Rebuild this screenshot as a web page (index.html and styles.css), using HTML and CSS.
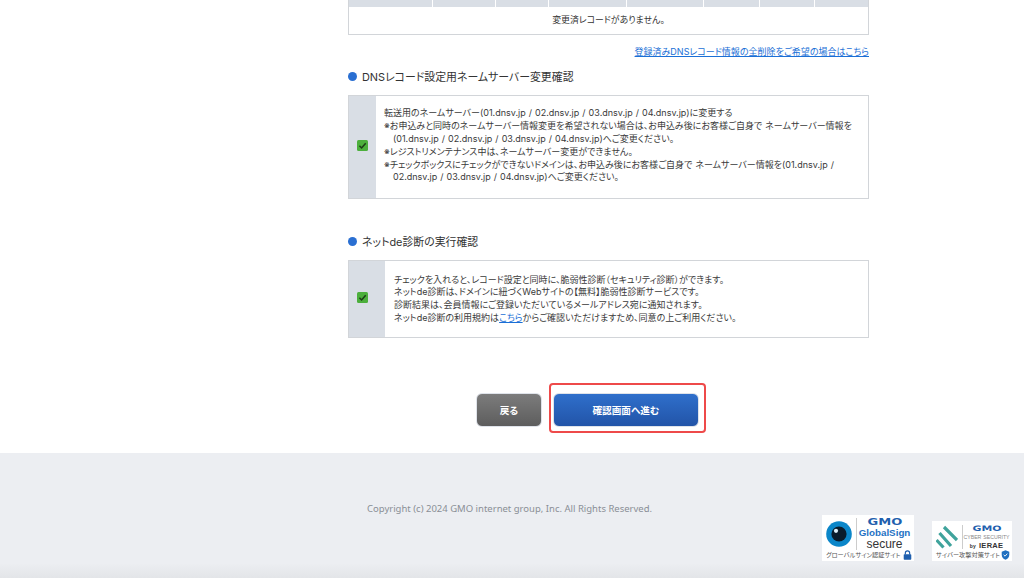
FILE: index.html
```html
<!DOCTYPE html>
<html lang="ja">
<head>
    <meta charset="UTF-8">
    <title>DNSレコード設定</title>
    <link rel="stylesheet" href="styles.css">
</head>
<body>
    <div class="page">
        <main class="content">
            <table class="record-table">
                <tr class="record-head">
                    <th></th><th></th><th></th><th></th><th></th><th></th><th></th><th></th>
                </tr>
                <tr>
                    <td colspan="8">変更済レコードがありません。</td>
                </tr>
            </table>
            <p class="delete-link"><a href="#">登録済みDNSレコード情報の全削除をご希望の場合はこちら</a></p>

            <h2 class="section-title first">DNSレコード設定用ネームサーバー変更確認</h2>
            <div class="check-box ns-box">
                <div class="check-cell narrow"><span class="checkmark"><svg viewBox="0 0 10 10"><path d="M2.2 5.2 4.2 7.2 7.9 2.9" /></svg></span></div>
                <div class="check-text ns-text">
                    <p class="lead">転送用のネームサーバー(01.dnsv.jp / 02.dnsv.jp / 03.dnsv.jp / 04.dnsv.jp)に変更する</p>
                    <p class="note">※お申込みと同時のネームサーバー情報変更を希望されない場合は、お申込み後にお客様ご自身で ネームサーバー情報を<br>(01.dnsv.jp / 02.dnsv.jp / 03.dnsv.jp / 04.dnsv.jp)へご変更ください。</p>
                    <p class="note">※レジストリメンテナンス中は、ネームサーバー変更ができません。</p>
                    <p class="note">※チェックボックスにチェックができないドメインは、お申込み後にお客様ご自身で ネームサーバー情報を(01.dnsv.jp /<br>02.dnsv.jp / 03.dnsv.jp / 04.dnsv.jp)へご変更ください。</p>
                </div>
            </div>

            <h2 class="section-title second">ネットde診断の実行確認</h2>
            <div class="check-box diag-box">
                <div class="check-cell wide"><span class="checkmark"><svg viewBox="0 0 10 10"><path d="M2.2 5.2 4.2 7.2 7.9 2.9" /></svg></span></div>
                <div class="check-text diag-text">
                    <p>チェックを入れると、レコード設定と同時に、脆弱性診断（セキュリティ診断）ができます。</p>
                    <p>ネットde診断は、ドメインに紐づくWebサイトの【無料】脆弱性診断サービスです。</p>
                    <p>診断結果は、会員情報にご登録いただいているメールアドレス宛に通知されます。</p>
                    <p>ネットde診断の利用規約は<a href="#">こちら</a>からご確認いただけますため、同意の上ご利用ください。</p>
                </div>
            </div>

            <div class="button-row">
                <button class="btn btn-back">戻る</button>
                <div class="highlight">
                    <button class="btn btn-next">確認画面へ進む</button>
                </div>
            </div>
        </main>
    </div>

    <footer class="footer">
        <p class="copyright">Copyright (c) 2024 GMO internet group, Inc. All Rights Reserved.</p>
        <div class="badges">
            <div class="badge badge-gs">
                <div class="badge-main">
                    <svg class="eye" viewBox="0 0 26 26">
                        <circle cx="13" cy="13" r="12.8" fill="#0b86c9" />
                        <circle cx="13" cy="13" r="7.6" fill="#0a1c2c" />
                        <circle cx="10" cy="9.8" r="2.1" fill="#dff1fa" />
                    </svg>
                    <div class="gs-words">
                        <span class="gmo">GMO</span>
                        <span class="gs-name">GlobalSign</span>
                        <span class="gs-secure">secure</span>
                    </div>
                </div>
                <div class="badge-foot">
                    <span>グローバルサイン認証サイト</span>
                    <svg class="lock" viewBox="0 0 10 11">
                        <path d="M2.6 5V3.3a2.4 2.4 0 0 1 4.8 0V5" fill="none" stroke="#1f5fae" stroke-width="1.3" />
                        <rect x="0.8" y="4.8" width="8.4" height="6" rx="0.8" fill="#1f5fae" />
                    </svg>
                </div>
            </div>
            <div class="badge badge-cs">
                <div class="badge-main">
                    <svg class="stripes" viewBox="0 0 22 24">
                        <path d="M8 2 21 15M3.500 8 15 21M.5 15 7.500 22.500" fill="none" stroke="#3fa39c" stroke-width="3.2" />
                    </svg>
                    <div class="cs-words">
                        <span class="gmo">GMO</span>
                        <span class="cs-name">CYBER SECURITY</span>
                        <span class="cs-by"><small>by</small> IERAE</span>
                    </div>
                </div>
                <div class="badge-foot">
                    <span>サイバー攻撃対策サイト</span>
                    <svg class="shield" viewBox="0 0 10 11">
                        <path d="M5 .3 9.2 1.800V5.400C9.2 8 7.300 9.800 5 10.700 2.700 9.800.8 8 .8 5.400V1.800z" fill="#1f6fc0" />
                        <path d="M3 5.300 4.500 6.800 7 4" fill="none" stroke="#fff" stroke-width="1" />
                    </svg>
                </div>
            </div>
        </div>
    </footer>
</body>
</html>
```

FILE: styles.css
```css
:root {
    --border-color: #d2d5d9;
    --cell-color: #d9dee5;
    --text-color: #333;
    --link-color: #1a6fd6;
    --footer-color: #eceef2;
}

* {
    box-sizing: border-box;
}

html, body {
    margin: 0;
    height: 578px;
    overflow: hidden;
}

body {
    font-family: Inter, "Noto Sans CJK JP", sans-serif;
    font-feature-settings: "palt";
    word-spacing: 0.5px;
    color: var(--text-color);
    background: white;
}

p {
    margin: 0;
}

a {
    color: var(--link-color);
}

.page {
    height: 453px;
    padding-left: 348px;
}

.content {
    width: 521px;
}

/* record table, scrolled off the top */
.record-table {
    width: 100%;
    border-collapse: collapse;
    table-layout: fixed;
    font-size: 8.9px;
    line-height: 14px;
}

.record-table td {
    height: 27px;
    padding-top: 1px;
    text-align: center;
    background: white;
    border: 1px solid var(--border-color);
    border-top: none;
}

.record-head th {
    height: 7px;
    padding: 0;
    background: var(--cell-color);
    border-left: 1px solid #fff;
}

.record-head th:first-child {
    width: 84px;
    border-left: 1px solid var(--border-color);
}

.record-head th:nth-child(2) { width: 63px; }
.record-head th:nth-child(3) { width: 53px; }
.record-head th:nth-child(4) { width: 78px; }
.record-head th:nth-child(5) { width: 77px; }
.record-head th:nth-child(6) { width: 56px; }
.record-head th:nth-child(7) { width: 55px; }

.record-head th:last-child {
    border-right: 1px solid var(--border-color);
}

.delete-link {
    margin-top: 10px;
    text-align: right;
    font-size: 9px;
    line-height: 14px;
}

.section-title {
    position: relative;
    margin: 0;
    padding-left: 14px;
    font-size: 10.9px;
    font-weight: 400;
    line-height: 16px;
}

.section-title::before {
    content: "";
    position: absolute;
    left: 0;
    top: 3px;
    width: 9px;
    height: 9px;
    border-radius: 50%;
    background: #2a6fd2;
}

.section-title.first {
    margin-top: 10px;
}

.section-title.second {
    margin-top: 35px;
}

.check-box {
    display: flex;
    margin-top: 10px;
    border: 1px solid var(--border-color);
}

.ns-box {
    height: 104px;
}

.diag-box {
    height: 78px;
}

.check-cell {
    display: flex;
    align-items: center;
    justify-content: center;
    flex: none;
    padding-bottom: 3px;
    background: var(--cell-color);
}

.check-cell.narrow {
    width: 27px;
}

.check-cell.wide {
    width: 36px;
    padding-right: 9px;
}

.checkmark {
    display: block;
    width: 11px;
    height: 11px;
    border-radius: 1.5px;
    background: #4caf3c;
}

.checkmark svg {
    display: block;
    width: 11px;
    height: 11px;
}

.checkmark path {
    fill: none;
    stroke: #1d3b17;
    stroke-width: 1.4;
}

.check-text {
    font-size: 9px;
    line-height: 12.8px;
    color: #3a3a3a;
}

.ns-text {
    padding: 11px 4px 0 8px;
    white-space: nowrap;
}

.ns-text .lead {
    margin-bottom: 1px;
}

.ns-text .note {
    padding-left: 9px;
    text-indent: -9px;
}

.diag-text {
    padding: 13px 0 0 9px;
}

.button-row {
    display: flex;
    align-items: flex-end;
    gap: 7px;
    margin-top: 45px;
    padding-left: 128px;
}

.btn {
    display: block;
    height: 34px;
    color: white;
    font-family: inherit;
    font-feature-settings: inherit;
    font-size: 9.6px;
    font-weight: 700;
    border: 1px solid #dfe3ea;
    border-radius: 6px;
    padding: 0;
}

.btn-back {
    width: 66px;
    margin-bottom: 6px;
    background: linear-gradient(#7c7c7c, #5d5d5d);
}

.highlight {
    padding: 8px 5px 4px 2px;
    border: 2px solid #ee4a4a;
    border-radius: 4px;
}

.btn-next {
    width: 146px;
    background: linear-gradient(#2f6fcb, #2254a8);
}

.footer {
    display: flex;
    justify-content: space-between;
    height: 125px;
    padding: 48px 12px 0 367px;
    background: linear-gradient(var(--footer-color) 88%, #e3e5e8);
}

.copyright {
    font-family: "Noto Sans", sans-serif;
    font-size: 9.5px;
    line-height: 15px;
    word-spacing: 0;
    color: #8a8e96;
}

.badges {
    display: flex;
    align-items: flex-end;
    gap: 18px;
    height: 60px;
}

.badge {
    display: flex;
    flex-direction: column;
    justify-content: space-between;
    background: white;
}

.badge-gs {
    width: 92px;
    height: 46px;
    padding: 3px 2px 1px 4px;
}

.badge-cs {
    width: 80px;
    height: 40px;
    padding: 4px 2px 1px 4px;
}

.badge-main {
    display: flex;
    align-items: center;
}

.eye {
    width: 26px;
    height: 26px;
    margin-top: 1px;
    flex: none;
}

.gs-words, .cs-words {
    display: flex;
    flex-direction: column;
    align-items: center;
    flex: 1;
    margin-left: 4px;
    border-left: 1px solid #ccc;
    font-family: "Liberation Sans", sans-serif;
    line-height: 1;
    white-space: nowrap;
}

.gmo {
    font-family: "DejaVu Sans", sans-serif;
    font-weight: 700;
    color: #1f5fae;
    font-size: 9px;
    transform: scaleX(1.45);
}

.gs-name {
    font-size: 9.8px;
    font-weight: 700;
    color: #1f72c4;
    margin-top: 1px;
}

.gs-secure {
    font-size: 12px;
    color: #333;
}

.stripes {
    width: 22px;
    height: 24px;
    flex: none;
}

.badge-cs .gmo {
    font-size: 7.5px;
}

.cs-name {
    font-size: 5.2px;
    color: #888;
    margin-top: 2px;
}

.cs-by {
    font-size: 7.5px;
    font-weight: 700;
    color: #333;
    margin-top: 2px;
    letter-spacing: 0.3px;
}

.cs-by small {
    font-size: 5px;
}

.badge-foot {
    display: flex;
    align-items: center;
    justify-content: space-between;
    font-size: 6.2px;
    line-height: 10px;
    white-space: nowrap;
    color: #555;
}

.lock, .shield {
    width: 9px;
    height: 10px;
    flex: none;
}
```
